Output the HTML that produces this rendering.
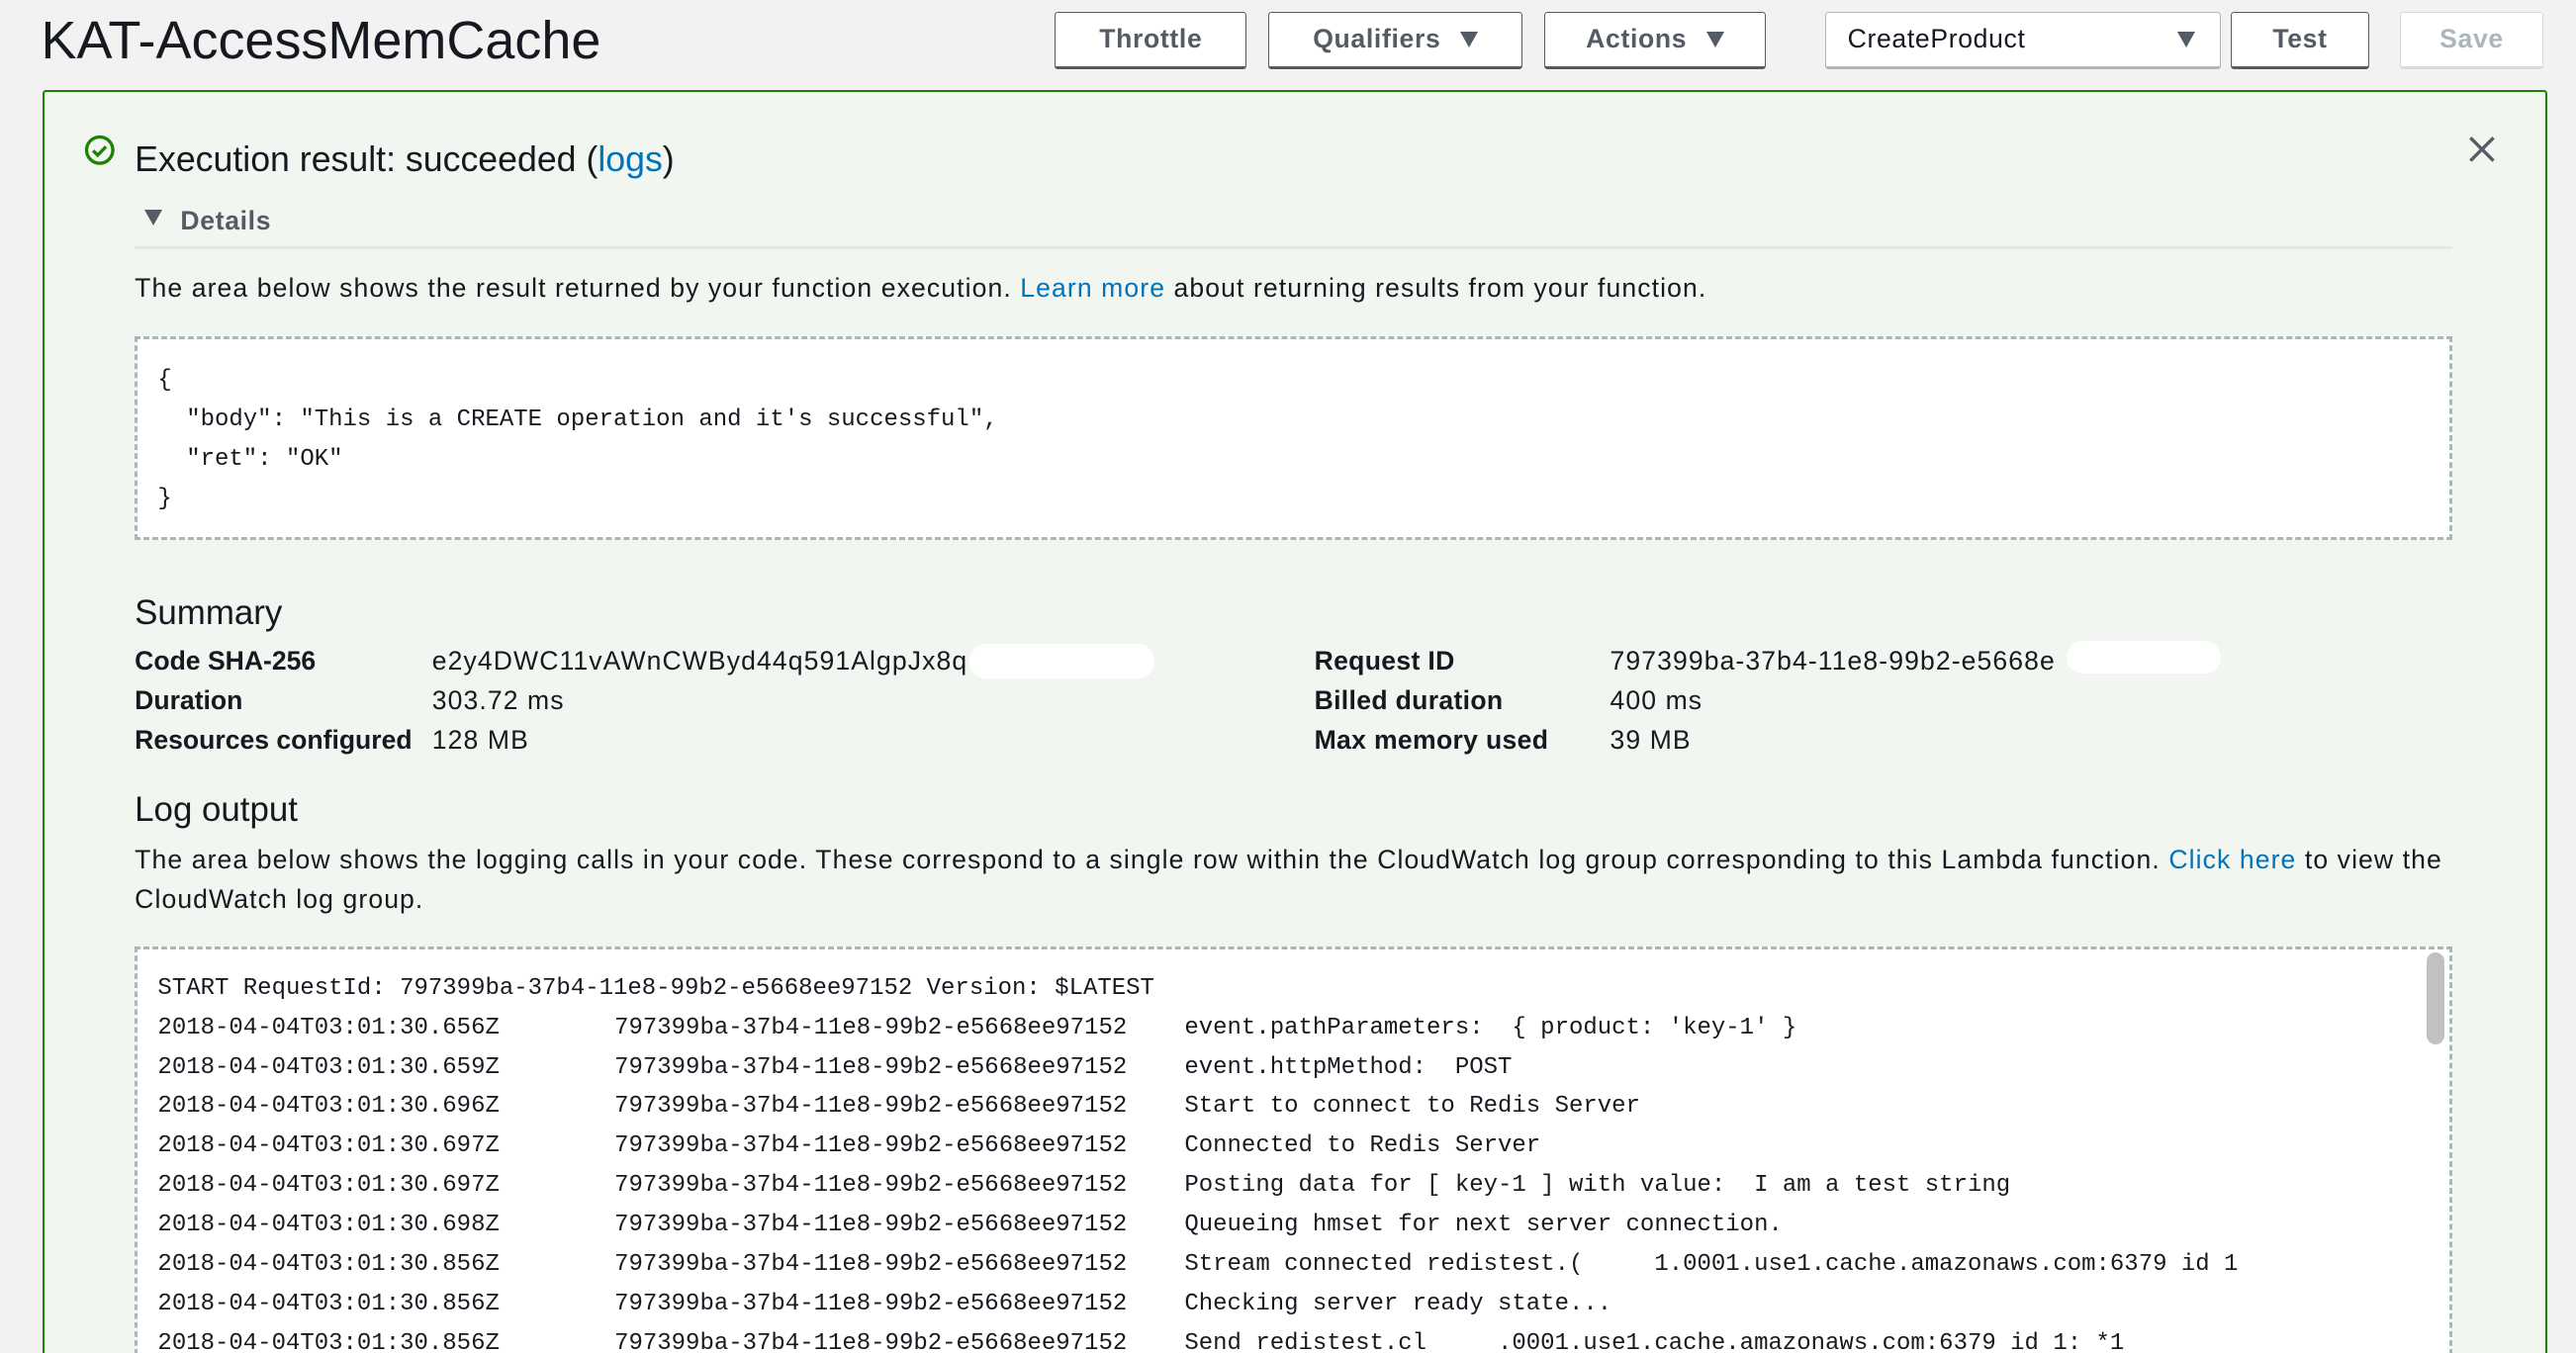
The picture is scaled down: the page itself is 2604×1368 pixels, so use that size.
<!DOCTYPE html>
<html><head><meta charset="utf-8">
<style>
html,body{margin:0;padding:0;background:#f2f2f2;overflow:hidden;}
body{width:2604px;height:1368px;}
#w{zoom:1.66071;width:1568px;height:824px;position:relative;overflow:hidden;font-family:"Liberation Sans",sans-serif;color:#16191f;}
.a{position:absolute;white-space:nowrap;}
.btn{position:absolute;top:7px;height:35px;border:1px solid #545b64;border-bottom-width:2px;border-radius:2px;background:#fff;font-weight:bold;font-size:16px;letter-spacing:.4px;color:#545b64;box-sizing:border-box;display:flex;align-items:center;justify-content:center;}
.tri{display:inline-block;width:0;height:0;border-left:6px solid transparent;border-right:6px solid transparent;border-top:10px solid #545b64;margin-left:12px;}
.box{position:absolute;left:26px;top:55px;width:1522px;height:790px;background:#f2f6f0;border:1.5px solid #1d8102;border-radius:2px;}
.dash{position:absolute;left:82px;width:1411px;background:#fff;border:2px dashed #aab7b8;box-sizing:border-box;}
.mono{font-family:"Liberation Mono",monospace;font-size:14.45px;color:#16191f;}
.mono div{white-space:pre;}
.t16{font-size:16px;letter-spacing:.66px;}
.lnk{color:#0073bb;}
.b{font-weight:bold;}
.ll{position:absolute;left:96px;}
</style></head><body><div id="w">
<div class="a" style="left:25px;top:6px;font-size:32.5px;">KAT-AccessMemCache</div>
<div class="btn" style="left:642px;width:117px;">Throttle</div>
<div class="btn" style="left:772px;width:155px;">Qualifiers<span class="tri"></span></div>
<div class="btn" style="left:940px;width:135px;">Actions<span class="tri"></span></div>
<div class="btn" style="left:1111px;width:241px;border-color:#aab7b8;font-weight:normal;color:#16191f;justify-content:space-between;padding:0 15px 0 13px;">CreateProduct<span class="tri"></span></div>
<div class="btn" style="left:1358px;width:84px;">Test</div>
<div class="btn" style="left:1461px;width:87px;border-color:#d5dbdb;color:#aab7b8;">Save</div>

<div class="box"></div>
<svg class="a" style="left:51px;top:82px" width="19" height="19" viewBox="0 0 19 19"><circle cx="9.5" cy="9.5" r="8" fill="none" stroke="#1d8102" stroke-width="2"/><path d="M5.5 9.8l2.8 2.8 5-5.2" fill="none" stroke="#1d8102" stroke-width="2"/></svg>
<div class="a" style="left:82px;top:85px;font-size:21.5px;">Execution result: succeeded (<span class="lnk">logs</span>)</div>
<svg class="a" style="left:1502px;top:82px" width="18" height="18" viewBox="0 0 18 18"><path d="M2 2L16 16M16 2L2 16" stroke="#545b64" stroke-width="2"/></svg>
<div class="a" style="left:88px;top:125px;font-size:16px;font-weight:bold;color:#545b64;letter-spacing:.4px"><span class="tri" style="margin:0 11px 0 0;vertical-align:2px"></span>Details</div>
<div class="a" style="left:82px;top:150px;width:1411px;height:2px;background:#e4e8e4;"></div>
<div class="a t16" style="left:82px;top:166px;">The area below shows the result returned by your function execution. <span class="lnk">Learn more</span> about returning results from your function.</div>

<div class="dash" style="top:205px;height:124px;"></div>
<div class="a mono" style="left:96px;top:220px;line-height:24px;white-space:pre;">{
  "body": "This is a CREATE operation and it's successful",
  "ret": "OK"
}</div>

<div class="a" style="left:82px;top:361px;font-size:21px;">Summary</div>
<div class="a t16" style="left:82px;top:391px;line-height:24px;"><div class="b" style="letter-spacing:0">Code SHA-256</div><div class="b" style="letter-spacing:0">Duration</div><div class="b" style="letter-spacing:0">Resources configured</div></div>
<div class="a t16" style="left:263px;top:391px;line-height:24px;"><div>e2y4DWC11vAWnCWByd44q591AlgpJx8q</div><div>303.72 ms</div><div>128 MB</div></div>
<div class="a" style="left:590px;top:392px;width:113px;height:21px;background:#fff;border-radius:10px;"></div>
<div class="a t16" style="left:800px;top:391px;line-height:24px;"><div class="b" style="letter-spacing:.2px">Request ID</div><div class="b" style="letter-spacing:.2px">Billed duration</div><div class="b" style="letter-spacing:.2px">Max memory used</div></div>
<div class="a t16" style="left:980px;top:391px;line-height:24px;"><div>797399ba-37b4-11e8-99b2-e5668e</div><div>400 ms</div><div>39 MB</div></div>
<div class="a" style="left:1258px;top:390px;width:94px;height:20px;background:#fff;border-radius:10px;"></div>

<div class="a" style="left:82px;top:481px;font-size:21px;">Log output</div>
<div class="a t16" style="left:82px;top:512px;line-height:24px;">The area below shows the logging calls in your code. These correspond to a single row within the CloudWatch log group corresponding to this Lambda function. <span class="lnk">Click here</span> to view the<br>CloudWatch log group.</div>

<div class="dash" style="top:576px;height:260px;"></div>
<div class="a" style="left:1477px;top:580px;width:11px;height:56px;background:#c1c1c1;border-radius:6px;"></div>
<div class="a mono" style="left:0;top:590px;line-height:24px;width:1470px;">
<div class="ll" style="top:0">START RequestId: 797399ba-37b4-11e8-99b2-e5668ee97152 Version: $LATEST</div>
<div class="ll" style="top:24px">2018-04-04T03:01:30.656Z</div><div class="a" style="left:374px;top:24px">797399ba-37b4-11e8-99b2-e5668ee97152</div><div class="a" style="left:721px;top:24px">event.pathParameters:  { product: 'key-1' }</div>
<div class="ll" style="top:48px">2018-04-04T03:01:30.659Z</div><div class="a" style="left:374px;top:48px">797399ba-37b4-11e8-99b2-e5668ee97152</div><div class="a" style="left:721px;top:48px">event.httpMethod:  POST</div>
<div class="ll" style="top:72px">2018-04-04T03:01:30.696Z</div><div class="a" style="left:374px;top:72px">797399ba-37b4-11e8-99b2-e5668ee97152</div><div class="a" style="left:721px;top:72px">Start to connect to Redis Server</div>
<div class="ll" style="top:96px">2018-04-04T03:01:30.697Z</div><div class="a" style="left:374px;top:96px">797399ba-37b4-11e8-99b2-e5668ee97152</div><div class="a" style="left:721px;top:96px">Connected to Redis Server</div>
<div class="ll" style="top:120px">2018-04-04T03:01:30.697Z</div><div class="a" style="left:374px;top:120px">797399ba-37b4-11e8-99b2-e5668ee97152</div><div class="a" style="left:721px;top:120px">Posting data for [ key-1 ] with value:  I am a test string</div>
<div class="ll" style="top:144px">2018-04-04T03:01:30.698Z</div><div class="a" style="left:374px;top:144px">797399ba-37b4-11e8-99b2-e5668ee97152</div><div class="a" style="left:721px;top:144px">Queueing hmset for next server connection.</div>
<div class="ll" style="top:168px">2018-04-04T03:01:30.856Z</div><div class="a" style="left:374px;top:168px">797399ba-37b4-11e8-99b2-e5668ee97152</div><div class="a" style="left:721px;top:168px">Stream connected redistest.(     1.0001.use1.cache.amazonaws.com:6379 id 1</div>
<div class="ll" style="top:192px">2018-04-04T03:01:30.856Z</div><div class="a" style="left:374px;top:192px">797399ba-37b4-11e8-99b2-e5668ee97152</div><div class="a" style="left:721px;top:192px">Checking server ready state...</div>
<div class="ll" style="top:216px">2018-04-04T03:01:30.856Z</div><div class="a" style="left:374px;top:216px">797399ba-37b4-11e8-99b2-e5668ee97152</div><div class="a" style="left:721px;top:216px">Send redistest.cl     .0001.use1.cache.amazonaws.com:6379 id 1: *1</div>
</div>
</div></body></html>
